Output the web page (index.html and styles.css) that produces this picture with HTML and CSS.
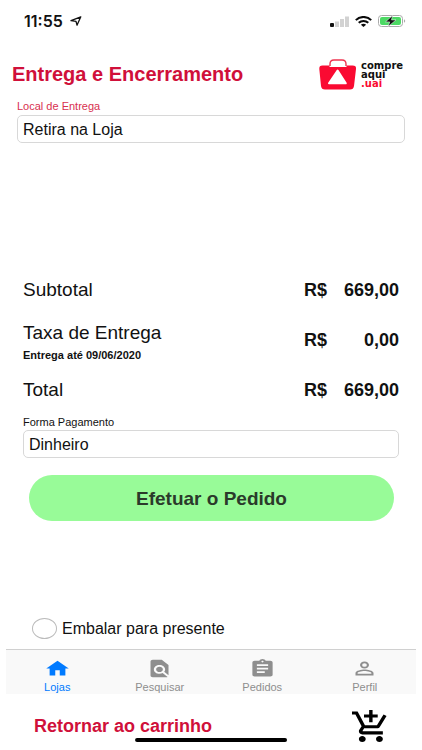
FILE: index.html
```html
<!DOCTYPE html>
<html lang="pt-BR">
<head>
<meta charset="utf-8">
<meta name="viewport" content="width=device-width, initial-scale=1">
<title>Entrega e Encerramento</title>
<link rel="stylesheet" href="styles.css">
</head>
<body>
<div class="status">
  <span class="clock">11:55</span>
  <svg class="arrow" viewBox="0 0 12 10" preserveAspectRatio="none"><path d="M1 4.7 10.8.8 7 9.2 6 5.3z" fill="none" stroke="#111" stroke-width="1.3" stroke-linejoin="round"/></svg>
  <svg class="signal" viewBox="0 0 20 11"><rect y="7" width="4" height="4" rx="1" fill="#111"/><path d="M5 5.500h4V11H5zM10 3h4v8h-4zM15 .5h4V11h-4z" fill="#d2d2d2"/></svg>
  <svg class="wifi" viewBox="0 0 17 11" preserveAspectRatio="none"><g fill="none" stroke="#0a0a0a" stroke-width="2"><path d="M.8 4.1C5-.1 12-.1 16.2 4.1"/><path d="M3.7 6.8c2.7-2.5 6.900-2.500 9.600 0"/></g><path d="M5.900 8.700c1.500-1.300 3.700-1.300 5.200 0L8.500 11z" fill="#0a0a0a"/></svg>
  <svg class="battery" viewBox="0 0 28 12"><rect x=".5" y=".5" width="24" height="11" rx="3" fill="#fff" stroke="#aaa"/><rect x="2" y="2" width="21" height="8" rx="2" fill="#4cd964"/><path d="M26 4.200c1.600.6 1.600 3 0 3.600z" fill="#aaa"/><path d="M14.500.5 7.500 6.900h4.200L10.300 11.500l7.700-6.600h-4.500z" fill="#111" stroke="#fff" stroke-width=".5"/></svg>
</div>

<header class="header">
  <h1>Entrega e Encerramento</h1>
  <div class="brand">
    <svg class="bag" viewBox="0 0 38 31"><path d="M11 7V5q0-4 4-4h8q4 0 4 4v2" fill="none" stroke="#ee3450" stroke-width="1.4"/><path d="M3.500 6.500h7v1.500h17V6.500h6q4 0 3.500 3.400L35 27q-.5 3.500-4 3.500H6Q2.500 30.500 2 27L.3 9.900Q0 6.500 3.500 6.500z" fill="#fa0a32"/><path d="M18.600 11.500 26.800 24.300H10z" fill="#fff" stroke="#fff" stroke-width="2" stroke-linejoin="round"/></svg>
    <p class="wordmark"><span>compre</span><span>aqui</span><span class="uai">.uai</span></p>
  </div>
</header>

<main class="main">
  <div class="field delivery">
    <label for="local">Local de Entrega</label>
    <input id="local" type="text" value="Retira na Loja">
  </div>

  <section class="order">
    <div class="line">
      <span class="name">Subtotal</span><b>R$</b><b class="amount">669,00</b>
    </div>
    <div class="line fee">
      <span class="name">Taxa de Entrega<small>Entrega até 09/06/2020</small></span><b>R$</b><b class="amount">0,00</b>
    </div>
    <div class="line">
      <span class="name">Total</span><b>R$</b><b class="amount">669,00</b>
    </div>
    <div class="field">
      <label for="pagamento">Forma Pagamento</label>
      <input id="pagamento" type="text" value="Dinheiro">
    </div>
    <button class="submit" type="button">Efetuar o Pedido</button>
  </section>

  <label class="gift"><input type="checkbox">Embalar para presente</label>
</main>

<nav class="tabs">
  <a class="active" href="#lojas">
    <svg viewBox="0 0 24 24" preserveAspectRatio="none"><path d="M10 20v-6h4v6h5v-8h3L12 3 2 12h3v8z"/></svg>Lojas</a>
  <a href="#pesquisar">
    <svg viewBox="0 0 24 24" preserveAspectRatio="none"><path d="M20 19.590V8l-6-6H6c-1.100 0-1.990.9-1.990 2L4 20c0 1.100.89 2 1.990 2H18c.45 0 .85-.15 1.190-.4l-4.430-4.430c-.8.520-1.740.83-2.760.83-2.760 0-5-2.240-5-5s2.240-5 5-5 5 2.240 5 5c0 1.020-.31 1.960-.83 2.750L20 19.590zM9 13c0 1.660 1.340 3 3 3s3-1.340 3-3-1.340-3-3-3-3 1.340-3 3z"/></svg>Pesquisar</a>
  <a href="#pedidos">
    <svg viewBox="0 0 24 24" preserveAspectRatio="none"><path d="M19 3h-4.180C14.400 1.840 13.300 1 12 1c-1.300 0-2.400.84-2.820 2H5c-1.100 0-2 .9-2 2v14c0 1.100.9 2 2 2h14c1.100 0 2-.9 2-2V5c0-1.100-.9-2-2-2zm-7 0c.55 0 1 .45 1 1s-.45 1-1 1-1-.45-1-1 .45-1 1-1zm2 14H7v-2h7v2zm3-4H7v-2h10v2zm0-4H7V7h10v2z"/></svg>Pedidos</a>
  <a href="#perfil">
    <svg viewBox="0 0 24 24" preserveAspectRatio="none"><path d="M12 5.900a2.100 2.100 0 1 1 0 4.200 2.100 2.100 0 0 1 0-4.200m0 9c2.970 0 6.100 1.460 6.100 2.100v1.100H5.900V17c0-.64 3.130-2.100 6.100-2.100M12 4C9.790 4 8 5.790 8 8s1.790 4 4 4 4-1.790 4-4-1.790-4-4-4zm0 9c-2.670 0-8 1.340-8 4v3h16v-3c0-2.660-5.330-4-8-4z"/></svg>Perfil</a>
</nav>

<footer class="footer">
  <a class="back" href="#carrinho">Retornar ao carrinho</a>
  <a class="cart" href="#carrinho" aria-label="Carrinho"><svg viewBox="1 1 21 21" preserveAspectRatio="none"><path d="M11 9h2V6h3V4h-3V1h-2v3H8v2h3v3zm-4 9c-1.100 0-1.990.9-1.990 2S5.900 22 7 22s2-.9 2-2-.9-2-2-2zm10 0c-1.100 0-1.990.9-1.990 2s.89 2 1.990 2 2-.9 2-2-.9-2-2-2zm-9.830-3.250l.03-.12.9-1.630h7.450c.75 0 1.410-.41 1.750-1.030l3.860-7.010L19.420 4h-.01l-1.100 2-2.760 5H8.530l-.13-.27L6.160 6l-.95-2-.94-2H1v2h2l3.600 7.590-1.350 2.450c-.16.280-.25.610-.25.960 0 1.100.9 2 2 2h12v-2H7.420c-.13 0-.25-.11-.25-.25z"/></svg></a>
  <span class="home-bar"></span>
</footer>
</body>
</html>
```
FILE: styles.css
```css
* {
  box-sizing: border-box;
}

body {
  margin: 0;
  min-height: 100vh;
  display: flex;
  flex-direction: column;
  background: #fff;
  color: #111;
  font-family: "Liberation Sans", Arial, sans-serif;
}

svg {
  display: block;
}

a {
  color: inherit;
  text-decoration: none;
}

.status {
  display: flex;
  align-items: center;
  height: 42px;
  padding: 0 16px 0 24px;
}

.clock {
  font: 600 16px/20px Inter, sans-serif;
}

.arrow {
  width: 12px;
  height: 10px;
  margin-left: 7px;
}

.signal {
  width: 20px;
  height: 11px;
  margin-left: auto;
}

.wifi {
  width: 17px;
  height: 11px;
  margin: 0 6px 0 5px;
}

.battery {
  width: 28px;
  height: 12px;
}

.header {
  display: flex;
  align-items: center;
  justify-content: space-between;
  height: 56px;
  padding: 8px 19px 0 12px;
}

h1 {
  margin: 0;
  font-size: 20px;
  line-height: 24px;
  color: #d0103a;
}

.brand {
  display: flex;
  align-items: center;
  gap: 4px;
}

.bag {
  width: 38px;
  height: 31px;
}

.wordmark {
  display: flex;
  flex-direction: column;
  width: 42px;
  margin: 0;
  font: bold 10px/9px "DejaVu Sans", sans-serif;
}

.uai {
  color: #fa0a32;
}

.main {
  flex: 1;
  display: flex;
  flex-direction: column;
}

.field {
  display: flex;
  flex-direction: column;
}

.field label {
  font-size: 11px;
  line-height: 16px;
}

.field input {
  width: 100%;
  height: 28px;
  padding: 2px 5px 0;
  border: 1px solid #d8d8d8;
  border-radius: 5px;
  background: #fff;
  color: #111;
  font: 16px "Liberation Sans", Arial, sans-serif;
}

.delivery {
  margin: 0 17px;
}

.delivery label {
  height: 17px;
  color: #d8304f;
}

.order {
  margin: auto 23px;
  padding-top: 32px;
}

.line {
  display: grid;
  grid-template-columns: 1fr 28px 67px;
  align-items: center;
  height: 36px;
  font-size: 18px;
  line-height: 20px;
}

.fee {
  height: 64px;
}

.amount {
  text-align: right;
}

.name {
  font-size: 19px;
}

.name small {
  display: block;
  padding-top: 4px;
  font-size: 11px;
  font-weight: bold;
  line-height: 16px;
}

.fee .name {
  padding-top: 6px;
}

.order .field {
  margin-top: 6px;
}

.submit {
  display: block;
  width: calc(100% - 11px);
  height: 46px;
  margin: 17px 6px 0;
  padding: 2px 6px 0;
  border: 0;
  border-radius: 23px;
  background: #98fb98;
  color: #2b3a2b;
  font: bold 19px "Liberation Sans", Arial, sans-serif;
}

.gift {
  display: flex;
  align-items: center;
  gap: 5px;
  margin: 0 32px 10px;
  font-size: 16px;
  line-height: 20px;
}

.gift input {
  appearance: none;
  width: 25px;
  height: 21px;
  margin: 0;
  border: 1px solid #bbb;
  border-radius: 50%;
}

.tabs {
  display: flex;
  height: 45px;
  margin: 0 6px;
  border-top: 1px solid #d0d0d0;
  background: #f9f9f9;
  color: #8e8e8e;
}

.tabs a {
  flex: 1;
  display: flex;
  flex-direction: column;
  align-items: center;
  padding-top: 8px;
  font-size: 11px;
  line-height: 14px;
}

.tabs svg {
  width: 27px;
  height: 22px;
  margin-bottom: 1px;
  fill: currentColor;
}

.tabs .active {
  color: #007aff;
}

.footer {
  position: relative;
  display: flex;
  align-items: center;
  justify-content: space-between;
  height: 56px;
  padding: 8px 34px 0;
}

.back {
  color: #d0103a;
  font-size: 18px;
  font-weight: bold;
  line-height: 20px;
}

.cart svg {
  width: 36px;
  height: 32px;
}

.home-bar {
  position: absolute;
  left: 50%;
  bottom: 8px;
  width: 36%;
  height: 4px;
  border-radius: 2px;
  background: #000;
  transform: translateX(-50%);
}
```
